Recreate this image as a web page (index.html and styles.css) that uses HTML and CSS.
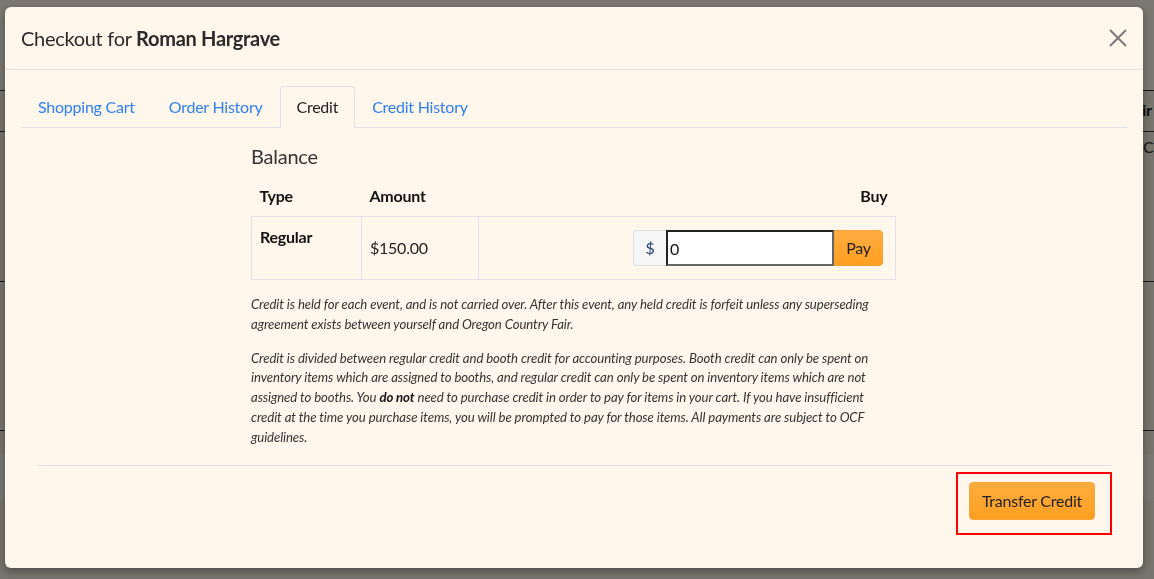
FILE: index.html
```html
<!DOCTYPE html>
<html>
<head>
<meta charset="utf-8">
<link rel="stylesheet" href="styles.css">
</head>
<body>
<div class="page">
  <div class="page-top"></div>
  <div class="page-row head-row"><span class="under-head">Pair</span></div>
  <div class="page-row cell-row"><span class="under-cell">Cl</span></div>
  <div class="page-row tall-row"></div>
  <div class="page-row tall-row2"></div>
  <div class="page-band"></div>
</div>
<div class="backdrop"></div>
<div class="modal">
  <div class="modal-header">
    <h4 class="modal-title">Checkout for <strong>Roman Hargrave</strong></h4>
    <button class="close" aria-label="Close">
      <svg width="18" height="18" viewBox="0 0 18 18"><path d="M1 1 L17 17 M17 1 L1 17" stroke="#7a7a7a" stroke-width="2" fill="none"/></svg>
    </button>
  </div>
  <div class="modal-body">
    <ul class="nav-tabs">
      <li class="tab"><a>Shopping Cart</a></li>
      <li class="tab"><a>Order History</a></li>
      <li class="tab active"><a>Credit</a></li>
      <li class="tab"><a>Credit History</a></li>
    </ul>
    <div class="tab-content">
      <div class="content-col">
        <h5 class="balance">Balance</h5>
        <table class="balance-table">
          <thead>
            <tr><th class="c-type">Type</th><th class="c-amount">Amount</th><th class="c-buy">Buy</th></tr>
          </thead>
          <tbody>
            <tr>
              <td class="t-top"><strong>Regular</strong></td>
              <td class="t-mid">$150.00</td>
              <td class="t-buy">
                <div class="input-group">
                  <span class="addon">$</span>
                  <input class="amount-input" type="text" value="0">
                  <button class="btn-orange pay">Pay</button>
                </div>
              </td>
            </tr>
          </tbody>
        </table>
        <p class="note">Credit is held for each event, and is not carried over. After this event, any held credit is forfeit unless any superseding agreement exists between yourself and Oregon Country Fair.</p>
        <p class="note">Credit is divided between regular credit and booth credit for accounting purposes. Booth credit can only be spent on inventory items which are assigned to booths, and regular credit can only be spent on inventory items which are not assigned to booths. You <strong>do not</strong> need to purchase credit in order to pay for items in your cart. If you have insufficient credit at the time you purchase items, you will be prompted to pay for those items. All payments are subject to OCF guidelines.</p>
      </div>
    </div>
    <div class="modal-footer">
      <div class="highlight">
        <button class="btn-orange transfer">Transfer Credit</button>
      </div>
    </div>
  </div>
</div>
</body>
</html>
```

FILE: styles.css
```css
html, body {
  margin: 0;
  padding: 0;
  overflow: hidden;
  width: 1154px;
  height: 579px;
}
body {
  font-family: "Lato", "Liberation Sans", sans-serif;
  letter-spacing: -0.24px;
  color: #222;
  background: #ece8d9;
}
.page {
  display: flex;
  flex-direction: column;
}
.page-top {
  height: 90px;
  background: #f4f0e2;
}
.page-row {
  border-top: 1px solid #333;
  box-sizing: border-box;
}
.head-row {
  height: 41px;
  padding-left: 1125px;
  padding-top: 9px;
  font-weight: 700;
  font-size: 16px;
  white-space: nowrap;
}
.cell-row {
  height: 150px;
  padding-left: 1143px;
  padding-top: 5px;
  font-size: 16px;
  white-space: nowrap;
}
.tall-row {
  height: 149px;
}
.tall-row2 {
  height: 24px;
}
.page-band {
  height: 47px;
  background: #f4f0e2;
}
.backdrop {
  position: fixed;
  inset: 0;
  background: rgba(0, 0, 0, 0.5);
}
.modal {
  position: fixed;
  top: 7px;
  left: 5px;
  width: 1138px;
  background: #fff7ec;
  border-radius: 6px;
  box-shadow: 0 3px 9px rgba(0, 0, 0, 0.35);
  color: #333;
}
.modal-header {
  display: flex;
  align-items: center;
  justify-content: space-between;
  padding: 16px;
  border-bottom: 1px solid #dee2e6;
}
.modal-title {
  margin: 0;
  font-size: 20px;
  line-height: 30px;
  font-weight: 400;
  letter-spacing: -0.3px;
  color: #2a2a2a;
}
.modal-title strong {
  font-weight: 700;
}
.close {
  background: none;
  border: none;
  padding: 0;
  margin: 0;
  height: 18px;
  display: flex;
}
.modal-body {
  padding: 16px 16px 33px;
}
.nav-tabs {
  display: flex;
  list-style: none;
  margin: 0;
  padding: 0;
  border-bottom: 1px solid #dee2e6;
}
.tab {
  margin-bottom: -1px;
}
.tab a {
  display: block;
  padding: 8px 16px;
  font-size: 16px;
  line-height: 24px;
  color: #2f80f2;
  border: 1px solid transparent;
  border-radius: 4px 4px 0 0;
}
.tab.active a {
  color: #222;
  background: #fff7ec;
  border-color: #dee2e6 #dee2e6 #fff7ec;
}
.tab-content {
  display: grid;
  grid-template-columns: 230px 645px;
}
.content-col {
  grid-column: 2;
  padding-top: 16px;
}
.balance {
  margin: 0 0 8px;
  font-size: 20px;
  line-height: 24px;
  font-weight: 400;
  color: #333;
}
.balance-table {
  width: 645px;
  border-collapse: collapse;
  font-size: 16px;
  margin-bottom: 15px;
}
.balance-table th {
  padding: 8px;
  line-height: 24px;
  text-align: left;
  font-weight: 700;
  color: #111;
}
.c-type { width: 94px; }
.c-amount { width: 101px; }
.balance-table th.c-buy { text-align: right; }
.balance-table td {
  border: 1px solid #dee2e6;
  padding: 8px;
  line-height: 24px;
  color: #222;
}
.balance-table td.t-top { vertical-align: top; }
.balance-table td.t-top strong { color: #111; }
.balance-table td.t-mid { vertical-align: middle; }
.balance-table td.t-buy { padding: 13px 12px 13px 13px; }
.input-group {
  display: flex;
  justify-content: flex-end;
}
.addon {
  box-sizing: border-box;
  width: 33px;
  height: 36px;
  display: flex;
  align-items: center;
  justify-content: center;
  background: #f6f6f6;
  border: 1px solid #dde1e6;
  border-right: none;
  border-radius: 4px 0 0 4px;
  color: #1d3e73;
  font-size: 16px;
}
.amount-input {
  box-sizing: border-box;
  width: 168px;
  height: 36px;
  margin: 0;
  padding: 0 2px;
  border: 2px solid #222;
  border-right-color: #666;
  border-bottom-color: #666;
  background: #fff;
  font-family: inherit;
  font-size: 16px;
  color: #111;
  outline: none;
}
.btn-orange {
  font-family: inherit;
  font-size: 16px;
  line-height: 24px;
  letter-spacing: -0.24px;
  color: #222;
  background: linear-gradient(#ffad42, #ff9f20);
  border: 1px solid #f5a437;
  cursor: pointer;
}
.pay {
  box-sizing: border-box;
  width: 49px;
  height: 36px;
  padding: 0;
  border-radius: 0 4px 4px 0;
}
.note {
  margin: 0 0 14px;
  padding-right: 5px;
  font-size: 13.2px;
  line-height: 19.8px;
  letter-spacing: -0.1px;
  font-style: italic;
  color: #333;
}
.note:last-child {
  margin-bottom: 17px;
}
.note strong {
  font-weight: 700;
  color: #111;
}
.modal-footer {
  margin: 0 16px;
  border-top: 1px solid #dee2e6;
  padding-top: 6px;
  display: flex;
  justify-content: flex-end;
}
.highlight {
  border: 2px solid #f00;
  padding: 8px 15px 13px 11px;
  margin-right: -1px;
}
.transfer {
  height: 38px;
  padding: 6px 12px;
  border-radius: 4px;
}
```
